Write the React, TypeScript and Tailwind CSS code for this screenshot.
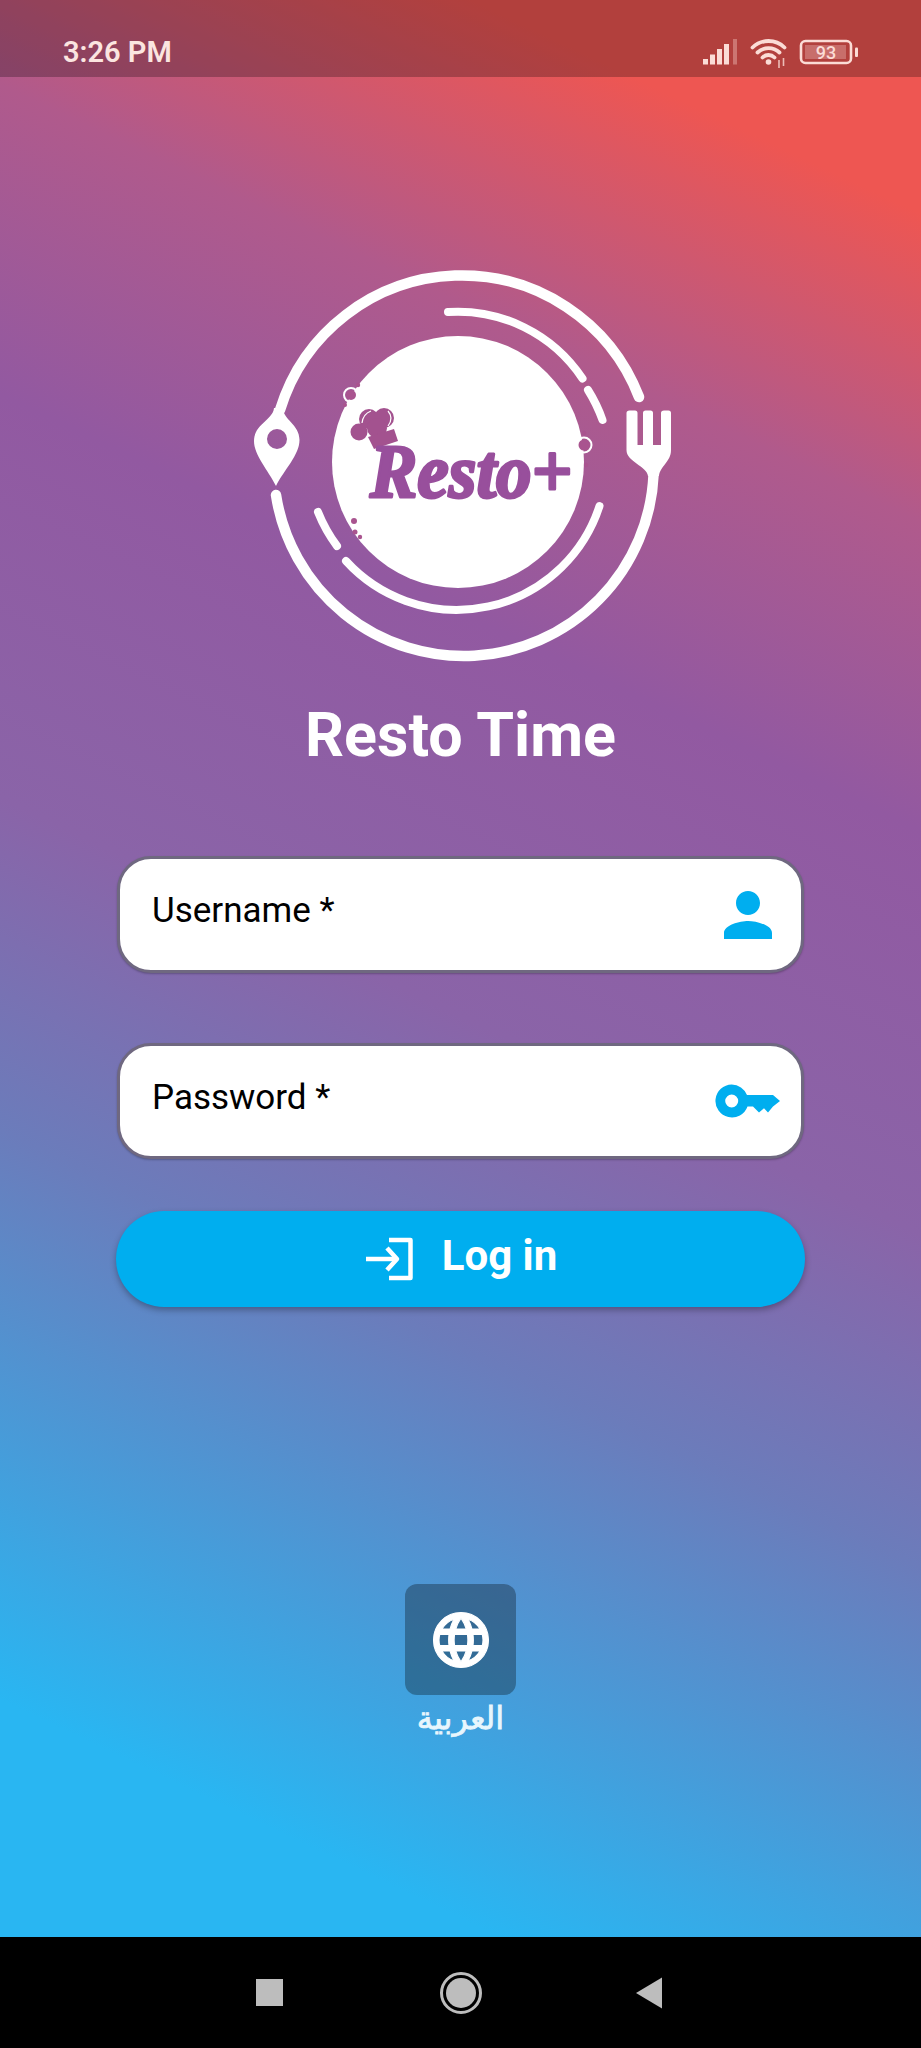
import { MdPerson } from "react-icons/md";

const roboto = "font-['Roboto',sans-serif]";

function StatusIcons() {
  return (
    <svg width="160" height="36" viewBox="700 32 160 36" className="text-[#fbdcd6]">
      {/* signal */}
      <g fill="currentColor">
        <rect x="703" y="57" width="5" height="5.5" />
        <rect x="710" y="52.5" width="5" height="10" />
        <rect x="717" y="47" width="5" height="15.5" />
        <rect x="724" y="42" width="5" height="20.5" />
        <rect x="733" y="37" width="4" height="25.5" opacity="0.35" />
      </g>
      {/* wifi */}
      <g fill="none" stroke="currentColor" strokeWidth="3.8" strokeLinecap="round">
        <path d="M752.500 45.500a23 23 0 0 1 32 0" />
        <path d="M757.500 50.500a16 16 0 0 1 22 0" />
        <path d="M762.500 55.500a8.500 8.500 0 0 1 12 0" />
      </g>
      <circle cx="768.500" cy="60" r="2.800" fill="currentColor" />
      <path d="M779 58v8M783.500 56v8" stroke="currentColor" strokeWidth="1.600" opacity="0.8" />
      {/* battery */}
      <rect x="801" y="39" width="50" height="22" rx="4.500" fill="none" stroke="currentColor" strokeWidth="2.600" />
      <rect x="805" y="43" width="41" height="14" fill="currentColor" opacity="0.3" />
      <rect x="855" y="45.500" width="3" height="9.500" rx="1" fill="currentColor" />
      <text x="826" y="57" textAnchor="middle" fontFamily="Roboto, sans-serif" fontWeight="500" fontSize="18" fill="currentColor">
        93
      </text>
    </svg>
  );
}

function Logo() {
  return (
    <svg width="460" height="430" viewBox="230 250 460 430" className="mx-auto block">
      {/* plate ring */}
      <g fill="none" stroke="#fff" strokeWidth="10.500" strokeLinecap="round">
        <path d="M279 410A190 190 0 0 1 638 397" />
        <path d="M652.600 474A190 190 0 0 1 275 495" />
      </g>
      {/* inner dashes */}
      <g fill="none" stroke="#fff" strokeWidth="8" strokeLinecap="round">
        <path d="M447 312A150 150 0 0 1 581.500 378.500" />
        <path d="M587 390A150 150 0 0 1 601.500 420" />
        <path d="M598.500 506A150 150 0 0 1 345 561" />
        <path d="M317 512A150 150 0 0 0 336 546" />
      </g>
      {/* pin */}
      <path
        fillRule="evenodd"
        fill="#fff"
        d="M273 408C272 420 253 424 253 441C253 455 267 470 275 486C283 470 298.500 455 298.500 440C298.500 424 282 420 282 408ZM276 429a10 10 0 1 1 0 20a10 10 0 1 1 0-20Z"
      />
      {/* fork */}
      <path
        fill="#fff"
        d="M625.500 413Q625.500 410.500 628.500 410.500H634Q636.500 410.500 636.500 413V445H642V413Q642 410.500 644.500 410.500H649.500Q652 410.500 652 413V445H660V413Q660 410.500 663 410.500H667.500Q670 410.500 670 413V450C670 462 659 466 658 476L647 476C646 466 625.500 462 625.500 450Z"
      />
      {/* plate */}
      <circle cx="457" cy="462" r="126" fill="#fff" />
      {/* bubbles */}
      <g fill="none" stroke="#fff" strokeWidth="2">
        <circle cx="350" cy="395" r="7" />
        <circle cx="583" cy="445" r="7.500" />
      </g>
      <g fill="#a9548f">
        <circle cx="350" cy="395" r="5" />
        <circle cx="357" cy="385" r="2.200" />
        <circle cx="344" cy="405" r="2" />
        <circle cx="583" cy="445" r="5.500" />
        <circle cx="583" cy="433" r="2.200" />
        <circle cx="585" cy="465" r="2.200" />
        <circle cx="353" cy="521" r="3" />
        <circle cx="354" cy="532" r="2.500" />
        <circle cx="359" cy="537" r="2.200" />
      </g>
      {/* chef hat */}
      <g fill="#a3528f">
        <circle cx="358" cy="432" r="8.500" />
        <circle cx="368" cy="419" r="10" />
        <circle cx="383" cy="418" r="10" />
        <circle cx="376" cy="428" r="10" />
        <path d="M367 437L393 429L397 441L373 449Z" />
      </g>
      <path d="M361 423Q362 414 370 411" fill="none" stroke="#fff" strokeWidth="1.200" />
      <path d="M387 411Q393 418 387 426" fill="none" stroke="#fff" strokeWidth="1.200" />
      <text
        x="369"
        y="497"
        textLength="202"
        lengthAdjust="spacingAndGlyphs"
        fontFamily="'Liberation Serif', serif"
        fontStyle="italic"
        fontWeight="700"
        fontSize="76"
        fill="#984f9c"
        stroke="#984f9c"
        strokeWidth="3"
        strokeLinejoin="round"
      >
        Resto+
      </text>
    </svg>
  );
}

function KeyIcon() {
  return (
    <svg width="100" height="60" viewBox="0 0 100 60">
      <path
        fillRule="evenodd"
        fill="#00aeef"
        d="M31.700 14.500a16.500 16.500 0 0 1 15.300 10.500H73L80 31L73 36.500L68 42.500L64 38.300L59 42.500L53 36.500H47.500A16.500 16.500 0 1 1 31.700 14.500ZM31.700 24.500a6.500 6.500 0 1 0 0 13a6.500 6.500 0 1 0 0-13Z"
      />
    </svg>
  );
}

function LoginIcon() {
  return (
    <svg width="50" height="46" viewBox="365 1236 50 46" fill="none" stroke="#fff" strokeWidth="4.500" strokeLinejoin="round">
      <path d="M367 1259H397" />
      <path d="M388 1248L398 1259L388 1270" />
      <path d="M390 1240H411.500V1278H390" />
    </svg>
  );
}

function GlobeIcon() {
  return (
    <svg width="66" height="66" viewBox="0 0 24 24" fill="#fff" stroke="#fff" strokeWidth="0.4">
      <path d="M11.990 2C6.470 2 2 6.480 2 12s4.470 10 9.990 10C17.520 22 22 17.520 22 12S17.520 2 11.990 2zm6.930 6h-2.950c-.320-1.250-.780-2.450-1.380-3.560 1.840.630 3.370 1.910 4.330 3.560zM12 4.040c.830 1.200 1.480 2.530 1.910 3.960h-3.820c.430-1.430 1.080-2.760 1.910-3.960zM4.260 14C4.100 13.360 4 12.690 4 12s.100-1.360.260-2h3.380c-.080.660-.140 1.320-.140 2 0 .680.060 1.340.140 2H4.260zm.820 2h2.950c.320 1.250.780 2.450 1.380 3.560-1.840-.630-3.370-1.900-4.330-3.560zm2.950-8H5.080c.960-1.660 2.490-2.930 4.330-3.560C8.810 5.550 8.350 6.750 8.030 8zM12 19.960c-.830-1.200-1.480-2.530-1.910-3.960h3.820c-.430 1.430-1.080 2.760-1.910 3.960zM14.340 14H9.660c-.090-.660-.160-1.320-.160-2 0-.680.070-1.350.160-2h4.680c.090.650.160 1.320.160 2 0 .680-.070 1.340-.160 2zm.250 5.560c.600-1.110 1.060-2.310 1.380-3.560h2.950c-.960 1.650-2.490 2.930-4.330 3.560zM16.360 14c.080-.660.140-1.320.140-2 0-.680-.060-1.340-.140-2h3.380c.160.640.260 1.310.260 2s-.100 1.360-.260 2h-3.380z" />
    </svg>
  );
}

export default function App() {
  return (
    <div className={`flex h-[2048px] w-[921px] flex-col overflow-hidden ${roboto}`}>
      <div className="flex h-[1937px] flex-col bg-[linear-gradient(25.4deg,#29b6f2_10%,#6b7cbb_34%,#8a64a8_48%,#9259a1_65%,#b05a8c_78%,#ee5652_91%)]">
        {/* Status bar */}
        <div className="flex h-[77px] shrink-0 items-center justify-between bg-black/25 pl-[63px] pr-[61px] pt-[27px]">
          <span className="text-[29px] font-semibold leading-none text-[#fbe5e0]">3:26 PM</span>
          <StatusIcons />
        </div>

        <div className="mt-[173px]">
          <Logo />
        </div>

        <h1 className="mt-[20px] text-center text-[61px] font-bold leading-[70px] text-white">Resto Time</h1>

        {/* Fields */}
        <div className="mx-[117px] mt-[86px] flex h-[117px] items-start justify-between rounded-[34px] border-[3px] border-[#6f6880] bg-white pl-[32px] pr-[17px] shadow-[0_1px_2px_rgba(0,0,0,0.25)]">
          <span className="mt-[31px] text-[35px] leading-[42px] text-black">Username *</span>
          <MdPerson className="mt-[20px] text-[#00aeef]" size={72} />
        </div>

        <div className="mx-[117px] mt-[70px] flex h-[116px] items-start justify-between rounded-[34px] border-[3px] border-[#6f6880] bg-white pl-[32px] pr-[1px] shadow-[0_1px_2px_rgba(0,0,0,0.25)]">
          <span className="mt-[31px] text-[35px] leading-[42px] text-black">Password *</span>
          <div className="pt-[24px]">
            <KeyIcon />
          </div>
        </div>

        {/* Log in */}
        <button className="mx-[116px] mt-[52px] flex h-[96px] items-center justify-center gap-[28px] rounded-full bg-[#00aeef] text-white shadow-[0_3px_6px_rgba(0,0,0,0.3)]">
          <LoginIcon />
          <span className="mb-[6px] text-[42px] font-bold leading-none">Log in</span>
        </button>

        {/* Language */}
        <div className="mt-[277px] flex flex-col items-center">
          <div className="flex h-[111px] w-[111px] items-center justify-center rounded-[12px] bg-black/30">
            <GlobeIcon />
          </div>
          <span dir="rtl" className="mt-[2px] font-['DejaVu_Sans',sans-serif] text-[32px] leading-[42px] text-[#e8f6fd] [-webkit-text-stroke:0.8px_#e8f6fd]">
            العربية
          </span>
        </div>
      </div>

      {/* Nav bar */}
      <div className="relative flex h-[111px] items-center bg-black pl-[256px]">
        <div className="h-[27px] w-[27px] bg-[#bdbdbd]" />
        <div className="ml-[157px] flex h-[42px] w-[42px] items-center justify-center rounded-full border-[3px] border-[#bdbdbd]">
          <div className="h-[30px] w-[30px] rounded-full bg-[#bdbdbd]" />
        </div>
        <svg width="28" height="32" viewBox="0 0 28 32" className="ml-[153px]">
          <path d="M1 16L27 0.500V31.500Z" fill="#bdbdbd" />
        </svg>
      </div>
    </div>
  );
}
